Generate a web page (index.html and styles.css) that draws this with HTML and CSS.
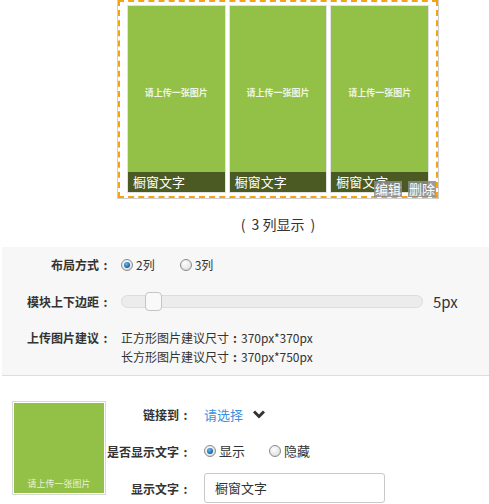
FILE: index.html
```html
<!DOCTYPE html>
<html lang="zh">
<head>
<meta charset="utf-8">
<title>橱窗</title>
<link rel="stylesheet" href="styles.css">
</head>
<body>
<div class="preview-wrap">
  <div class="preview">
    <div class="dash">
      <div class="cell"><div class="ph">请上传一张图片</div><div class="cap">橱窗文字</div></div>
      <div class="cell"><div class="ph">请上传一张图片</div><div class="cap">橱窗文字</div></div>
      <div class="cell"><div class="ph">请上传一张图片</div><div class="cap">橱窗文字</div></div>
    </div>
    <div class="ops"><span class="op">编辑</span><span class="op">删除</span></div>
  </div>
  <div class="preview-note"><span class="par">(</span>3 列显示<span class="par">)</span></div>
</div>

<div class="panel">
  <div class="row">
    <div class="label">布局方式<span class="p">:</span></div>
    <div class="val">
      <span class="radio on"></span><span class="rtext">2列</span>
      <span class="radio"></span><span class="rtext">3列</span>
    </div>
  </div>
  <div class="row">
    <div class="label">模块上下边距<span class="p">:</span></div>
    <div class="val">
      <div class="slider"><div class="thumb"></div></div>
      <span class="px">5px</span>
    </div>
  </div>
  <div class="row top">
    <div class="label">上传图片建议<span class="p">:</span></div>
    <div class="val lines">
      <div>正方形图片建议尺寸<span class="p">:</span>370px*370px</div>
      <div>长方形图片建议尺寸<span class="p">:</span>370px*750px</div>
    </div>
  </div>
</div>

<div class="item">
  <div class="thumb-box"><div class="thumb-img"><span>请上传一张图片</span></div></div>
  <div class="form">
    <div class="frow r1">
      <div class="flabel">链接到<span class="p">:</span></div>
      <div class="fval"><span class="link">请选择</span>
        <svg class="chev" width="12" height="9" viewBox="0 0 12 9"><path d="M1 1.5 L6 6.5 L11 1.5" fill="none" stroke="#333" stroke-width="3"/></svg>
      </div>
    </div>
    <div class="frow r2">
      <div class="flabel">是否显示文字<span class="p">:</span></div>
      <div class="fval">
        <span class="radio on"></span><span class="rtext">显示</span>
        <span class="radio"></span><span class="rtext">隐藏</span>
      </div>
    </div>
    <div class="frow r3">
      <div class="flabel">显示文字<span class="p">:</span></div>
      <div class="fval"><div class="input">橱窗文字</div></div>
    </div>
  </div>
</div>
</body>
</html>
```
FILE: styles.css
```css
* { box-sizing: border-box; }
body {
  margin: 0;
  font-family: "Noto Sans CJK SC", "Liberation Sans", sans-serif;
  color: #333;
  background: #fff;
  width: 489px;
  height: 504px;
  overflow: hidden;
}
.p {
  display: inline-block;
  width: 13px;
  text-align: center;
  font-weight: bold;
}
.par {
  display: inline-block;
  width: 13px;
  text-align: center;
}
.par:first-child { margin-right: 2px; }
.par:last-child { margin-left: 2px; }
.preview-wrap { margin-left: 117px; width: 322px; }
.preview {
  position: relative;
  margin-top: -1px;
  border: 1px solid #cfcfcf;
  height: 200px;
}
.dash {
  border: 2px dashed #f7a30f;
  height: 198px;
  padding: 3px 7px 3px 7px;
  display: flex;
  gap: 3px;
}
.cell {
  position: relative;
  width: 99px;
  height: 188px;
  border: 1px solid #e2e2e2;
  background: #93c047;
}
.ph {
  position: absolute;
  left: 0; right: 0; top: 80px;
  text-align: center;
  font-size: 9px;
  font-weight: bold;
  color: #eef5e2;
}
.cap {
  position: absolute;
  left: 0; right: 0; bottom: 0;
  height: 20px;
  background: #4a5a22;
  color: #fff;
  font-size: 13px;
  line-height: 20px;
  padding-left: 5px;
}
.ops {
  position: absolute;
  right: 2px;
  bottom: 1px;
  display: flex;
  gap: 6px;
}
.op {
  background: rgba(140,140,140,0.85);
  color: #fff;
  font-size: 13px;
  line-height: 16px;
  height: 16px;
  padding: 0 1px;
}
.preview-note {
  text-align: center;
  font-size: 14px;
  line-height: 20px;
  margin-top: 15px;
  color: #333;
}

.panel {
  margin-top: 13px;
  margin-left: 2px;
  background: #f7f7f7;
  border-bottom: 1px solid #dedede;
  padding: 8px 0 9px 0;
}
.row {
  display: flex;
  align-items: center;
  min-height: 20px;
  margin-bottom: 16px;
}
.row:last-child { margin-bottom: 0; }
.row.top { align-items: flex-start; }
.label {
  width: 110px;
  text-align: right;
  font-size: 12px;
  font-weight: bold;
  line-height: 20px;
  color: #333;
}
.val {
  margin-left: 9px;
  display: flex;
  align-items: center;
  font-size: 12px;
}
.lines .p { font-weight: bold; width: 12px; }
.radio {
  display: inline-block;
  width: 12px;
  height: 12px;
  border-radius: 50%;
  border: 1px solid #8a8a8a;
  background: radial-gradient(circle at 40% 35%, #fff 0%, #e6e6e6 60%, #c8c8c8 100%);
  position: relative;
}
.radio.on::after {
  content: "";
  position: absolute;
  left: 2px; top: 2px;
  width: 6px; height: 6px;
  border-radius: 50%;
  background: radial-gradient(circle at 40% 35%, #6fb8ee 0%, #1a6db0 60%, #0b4a85 100%);
}
.rtext {
  font-size: 12px;
  margin-left: 3px;
  margin-right: 25px;
  line-height: 20px;
}
.slider {
  position: relative;
  width: 302px;
  height: 13px;
  background: #ececec;
  border: 1px solid #dcdcdc;
  border-radius: 7px;
}
.thumb {
  position: absolute;
  left: 23px;
  top: -4px;
  width: 17px;
  height: 19px;
  background: #f9f9f9;
  border: 1px solid #c4c4c4;
  border-radius: 4px;
}
.px {
  margin-left: 10px;
  font-size: 15px;
  color: #333;
}
.lines { display: block; line-height: 19px; }

.item {
  display: flex;
  padding-top: 25px;
}
.thumb-box {
  margin-left: 12px;
  width: 94px;
  height: 94px;
  border: 1px solid #d8d8d8;
  padding: 1px;
  background: #fff;
}
.thumb-img {
  width: 90px;
  height: 90px;
  background: #93c047;
  position: relative;
}
.thumb-img span {
  position: absolute;
  left: 0; right: 0; bottom: 3px;
  text-align: center;
  font-size: 9px;
  color: #e8f1da;
}
.form { margin-top: 3px; }
.frow { display: flex; align-items: center; }
.r1 { height: 20px; }
.r2 { height: 20px; margin-top: 17px; }
.r3 { height: 30px; margin-top: 12px; }
.flabel {
  width: 86px;
  text-align: right;
  font-size: 12px;
  font-weight: bold;
  color: #333;
}
.fval {
  margin-left: 12px;
  display: flex;
  align-items: center;
  font-size: 12px;
}
.link { color: #3b8fe0; font-size: 13px; }
.chev { margin-left: 10px; }
.r2 .rtext { font-size: 13px; margin-right: 24px; }
.input {
  width: 181px;
  height: 30px;
  border: 1px solid #c9c9c9;
  border-radius: 3px;
  background: #fff;
  padding-left: 10px;
  font-size: 13px;
  line-height: 28px;
}
```
